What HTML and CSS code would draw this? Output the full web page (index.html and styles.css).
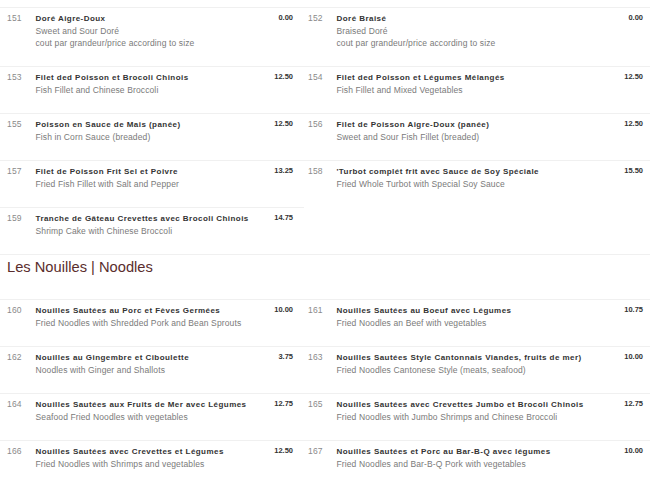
FILE: index.html
```html
<!DOCTYPE html>
<html>
<head>
<meta charset="utf-8">
<link rel="stylesheet" href="styles.css">
</head>
<body>
<div class="menu">
  <section class="grid">
    <div class="item left"><span class="num">151</span><div class="body"><div class="name">Doré Aigre-Doux</div><div class="desc">Sweet and Sour Doré</div><div class="desc">cout par grandeur/price according to size</div></div><span class="price">0.00</span></div>
    <div class="item right"><span class="num">152</span><div class="body"><div class="name">Doré Braisé</div><div class="desc">Braised Doré</div><div class="desc">cout par grandeur/price according to size</div></div><span class="price">0.00</span></div>
    <div class="item left"><span class="num">153</span><div class="body"><div class="name">Filet ded Poisson et Brocoli Chinois</div><div class="desc">Fish Fillet and Chinese Broccoli</div></div><span class="price">12.50</span></div>
    <div class="item right"><span class="num">154</span><div class="body"><div class="name">Filet ded Poisson et Légumes Mélangés</div><div class="desc">Fish Fillet and Mixed Vegetables</div></div><span class="price">12.50</span></div>
    <div class="item left"><span class="num">155</span><div class="body"><div class="name">Poisson en Sauce de Mais (panée)</div><div class="desc">Fish in Corn Sauce (breaded)</div></div><span class="price">12.50</span></div>
    <div class="item right"><span class="num">156</span><div class="body"><div class="name">Filet de Poisson Aigre-Doux (panée)</div><div class="desc">Sweet and Sour Fish Fillet (breaded)</div></div><span class="price">12.50</span></div>
    <div class="item left"><span class="num">157</span><div class="body"><div class="name">Filet de Poisson Frit Sel et Poivre</div><div class="desc">Fried Fish Fillet with Salt and Pepper</div></div><span class="price">13.25</span></div>
    <div class="item right"><span class="num">158</span><div class="body"><div class="name">'Turbot complét frit avec Sauce de Soy Spéciale</div><div class="desc">Fried Whole Turbot with Special Soy Sauce</div></div><span class="price">15.50</span></div>
    <div class="item left"><span class="num">159</span><div class="body"><div class="name">Tranche de Gâteau Crevettes avec Brocoli Chinois</div><div class="desc">Shrimp Cake with Chinese Broccoli</div></div><span class="price">14.75</span></div>
  </section>
  <h2 class="heading">Les Nouilles | Noodles</h2>
  <section class="grid">
    <div class="item left"><span class="num">160</span><div class="body"><div class="name">Nouilles Sautées au Porc et Fèves Germées</div><div class="desc">Fried Noodles with Shredded Pork and Bean Sprouts</div></div><span class="price">10.00</span></div>
    <div class="item right"><span class="num">161</span><div class="body"><div class="name">Nouilles Sautées au Boeuf avec Légumes</div><div class="desc">Fried Noodles an Beef with vegetables</div></div><span class="price">10.75</span></div>
    <div class="item left"><span class="num">162</span><div class="body"><div class="name">Nouilles au Gingembre et Ciboulette</div><div class="desc">Noodles with Ginger and Shallots</div></div><span class="price">3.75</span></div>
    <div class="item right"><span class="num">163</span><div class="body"><div class="name">Nouilles Sautées Style Cantonnais Viandes, fruits de mer)</div><div class="desc">Fried Noodles Cantonese Style (meats, seafood)</div></div><span class="price">10.00</span></div>
    <div class="item left"><span class="num">164</span><div class="body"><div class="name">Nouilles Sautées aux Fruits de Mer avec Légumes</div><div class="desc">Seafood Fried Noodles with vegetables</div></div><span class="price">12.75</span></div>
    <div class="item right"><span class="num">165</span><div class="body"><div class="name">Nouilles Sautées avec Crevettes Jumbo et Brocoli Chinois</div><div class="desc">Fried Noodles with Jumbo Shrimps and Chinese Broccoli</div></div><span class="price">12.75</span></div>
    <div class="item left"><span class="num">166</span><div class="body"><div class="name">Nouilles Sautées avec Crevettes et Légumes</div><div class="desc">Fried Noodles with Shrimps and vegetables</div></div><span class="price">12.50</span></div>
    <div class="item right"><span class="num">167</span><div class="body"><div class="name">Nouilles Sautées et Porc au Bar-B-Q avec légumes</div><div class="desc">Fried Noodles and Bar-B-Q Pork with vegetables</div></div><span class="price">10.00</span></div>
  </section>
</div>
</body>
</html>
```
FILE: styles.css
```css
html, body {
  margin: 0;
  padding: 0;
  background: #fff;
}
body {
  font-family: "Liberation Sans", Arial, sans-serif;
  overflow: hidden;
}
.menu {
  padding-top: 7px;
}
.grid {
  display: grid;
  grid-template-columns: 304px 1fr;
}
.item {
  display: flex;
  align-items: flex-start;
  border-top: 1px solid #f0f0f0;
  padding-top: 4px;
  padding-bottom: 17px;
}
.item.left {
  padding-left: 7px;
  padding-right: 11px;
}
.item.right {
  padding-left: 4px;
  padding-right: 7px;
}
.num {
  flex: 0 0 28.5px;
  font-size: 8.5px;
  line-height: 13px;
  color: #8a8a8a;
  letter-spacing: 0.2px;
}
.body {
  flex: 1;
  min-width: 0;
}
.name {
  font-size: 8px;
  line-height: 13px;
  font-weight: bold;
  color: #333;
  letter-spacing: 0.45px;
  white-space: nowrap;
}
.desc {
  font-size: 8.5px;
  line-height: 12px;
  color: #7a7a7a;
  letter-spacing: 0.12px;
  white-space: nowrap;
}
.price {
  font-size: 7.5px;
  line-height: 12px;
  font-weight: bold;
  color: #333;
  text-align: right;
  padding-left: 6px;
}
.heading {
  margin: 0 0 23px;
  border-top: 1px solid #f0f0f0;
  padding: 3px 0 0 7px;
  font-size: 14.7px;
  line-height: 18px;
  font-weight: normal;
  color: #5a2d2d;
}
```
